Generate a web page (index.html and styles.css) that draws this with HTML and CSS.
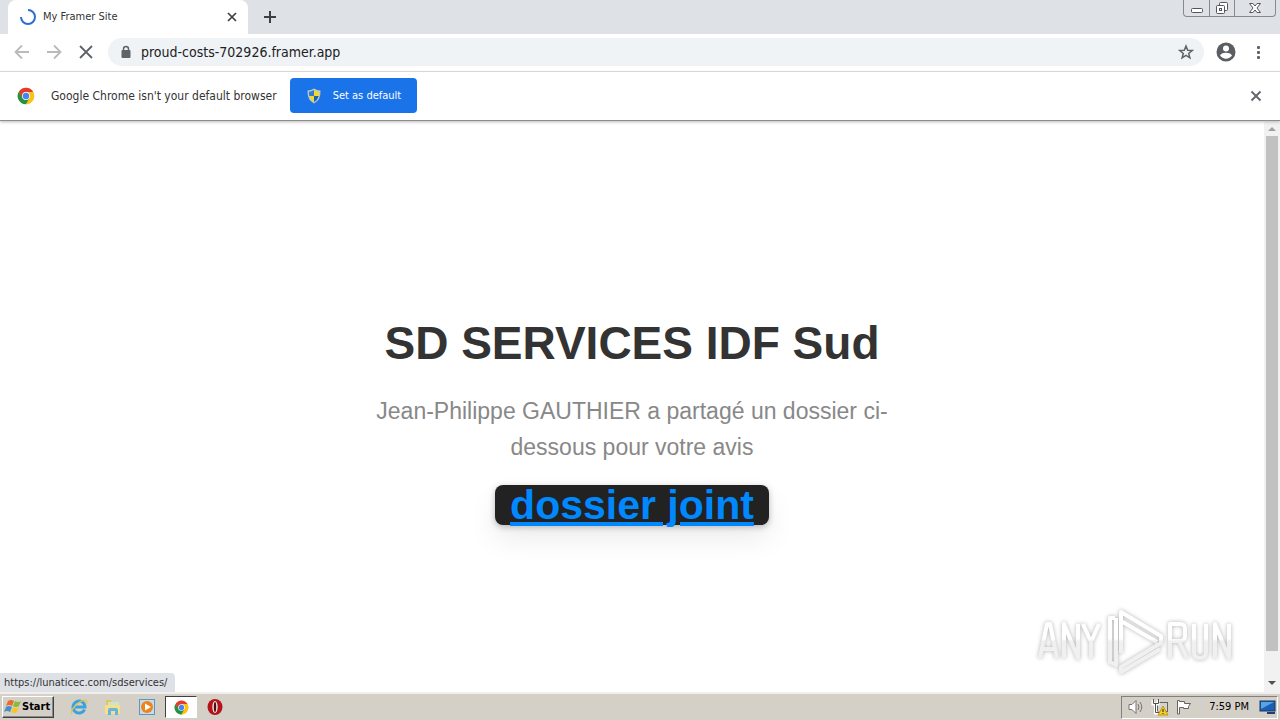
FILE: index.html
```html
<!DOCTYPE html>
<html lang="fr">
<head>
<meta charset="utf-8">
<title>My Framer Site</title>
<link rel="stylesheet" href="styles.css">
</head>
<body>
<svg class="defs" width="0" height="0" aria-hidden="true">
  <symbol id="chrome" viewBox="0 0 48 48">
    <circle cx="24" cy="24" r="22" fill="#fbc116"/>
    <path d="M5 12.500A22 22 0 0 1 43 13L24 13.500 14 30Z" fill="#e33b2e"/>
    <path d="M5 12.500A22 22 0 0 0 24 46L34 29.500 14.500 29.500Z" fill="#229342"/>
    <path d="M43 13H24L34 29.500 24 46A22 22 0 0 0 43 13Z" fill="#fbc116"/>
    <circle cx="24" cy="24" r="10.500" fill="#fff"/>
    <circle cx="24" cy="24" r="8.500" fill="#4285f4"/>
  </symbol>
</svg>
<header class="titlebar">
  <div class="tab">
    <svg width="18" height="18" viewBox="0 0 18 18" fill="none" stroke="#2b6fd4" stroke-width="2"><path d="M9 2a7 7 0 1 1-7 7"/></svg>
    <span class="tab-title">My Framer Site</span>
    <button class="icon-btn" aria-label="Close tab"><svg width="16" height="16" viewBox="0 0 16 16" stroke="#3c4043" stroke-width="1.700"><path d="M4 4l8 8M12 4l-8 8"/></svg></button>
  </div>
  <button class="icon-btn new-tab" aria-label="New tab"><svg width="16" height="16" viewBox="0 0 16 16" stroke="#3c4043" stroke-width="2"><path d="M8 2v12M2 8h12"/></svg></button>
  <div class="window-buttons">
    <button aria-label="Minimize"><svg width="14" height="16" viewBox="0 0 14 16"><rect x="1.500" y="8.500" width="11" height="4" rx="1" fill="#fff" stroke="#53565f"/></svg></button>
    <button aria-label="Restore"><svg width="14" height="16" viewBox="0 0 14 16" fill="#fff" stroke="#53565f"><rect x="4.500" y="2.500" width="8" height="8" rx="1"/><rect x="1.500" y="5.500" width="8" height="8" rx="1"/><rect x="4.500" y="8.500" width="2" height="2"/></svg></button>
    <button class="wide" aria-label="Close"><svg width="14" height="16" viewBox="0 0 14 16"><path d="M1.500 3.500h3.500l2 2.500 2-2.500h3.500l-3.500 4.500 3.500 4.500h-3.500l-2-2.500-2 2.500h-3.500l3.500-4.500z" fill="#fff" stroke="#53565f"/></svg></button>
  </div>
</header>
<nav class="toolbar">
  <button class="icon-btn nav-btn" aria-label="Back"><svg width="16" height="16" viewBox="0 0 16 16" fill="none" stroke="#bababa" stroke-width="1.800"><path d="M15 8H2M8 1.500L1.500 8 8 14.500"/></svg></button>
  <button class="icon-btn nav-btn" aria-label="Forward"><svg width="16" height="16" viewBox="0 0 16 16" fill="none" stroke="#bababa" stroke-width="1.800"><path d="M1 8h13M8 1.500L14.500 8 8 14.500"/></svg></button>
  <button class="icon-btn nav-btn" aria-label="Stop"><svg width="16" height="16" viewBox="0 0 16 16" stroke="#5f6368" stroke-width="1.800"><path d="M2 2l12 12M14 2L2 14"/></svg></button>
  <div class="omnibox">
    <svg width="12" height="14" viewBox="0 0 12 14"><rect x="1.500" y="5" width="9" height="8" rx="1" fill="#5f6368"/><path d="M3.500 6V4a2.500 2.500 0 0 1 5 0v2" fill="none" stroke="#5f6368" stroke-width="1.500"/></svg>
    <input class="url" type="text" aria-label="Address" value="proud-costs-702926.framer.app">
    <button class="icon-btn" aria-label="Bookmark"><svg width="16" height="16" viewBox="0 0 16 16" fill="none" stroke="#5f6368" stroke-width="1.500"><path d="M8 2l1.700 4.200 4.500.300-3.500 2.900 1.200 4.400L8 11.400l-3.900 2.400 1.200-4.400-3.500-2.900 4.500-.300z"/></svg></button>
  </div>
  <button class="icon-btn" aria-label="Profile"><svg width="20" height="20" viewBox="0 0 20 20"><circle cx="10" cy="10" r="9.500" fill="#5a5d62"/><circle cx="10" cy="6.500" r="3" fill="#fff"/><path d="M4 13.500c1-2 3.500-2.700 6-2.700s5 .700 6 2.700c-1.300 2-3.500 3.200-6 3.200s-4.700-1.200-6-3.200z" fill="#fff"/></svg></button>
  <button class="icon-btn" aria-label="Menu"><svg width="16" height="16" viewBox="0 0 16 16" fill="#5f6368"><rect x="7" y="2" width="3" height="3" rx="1"/><rect x="7" y="7" width="3" height="3" rx="1"/><rect x="7" y="12" width="3" height="3" rx="1"/></svg></button>
</nav>
<section class="infobar">
  <svg width="18" height="18"><use href="#chrome"/></svg>
  <span class="info-text">Google Chrome isn't your default browser</span>
  <button class="default-btn">
    <svg width="16" height="16" viewBox="0 0 16 16"><path d="M8 .500Q11 2.500 14.500 2.500 15 12 8 15.500 1 12 1.500 2.500 5 2.500 8 .500z" fill="#b9c8cd"/><path d="M8 2Q5.500 3.500 3 3.800 2.800 6 3.300 8H8z" fill="#2f7fd0"/><path d="M8 2q2.500 1.500 5 1.800.200 2.200-.300 4.200H8z" fill="#f7d72e"/><path d="M3.300 8Q4.300 12 8 14V8z" fill="#f7d72e"/><path d="M12.700 8q-1 4-4.700 6V8z" fill="#1b65a8"/></svg>
    <span>Set as default</span>
  </button>
  <button class="icon-btn dismiss" aria-label="Dismiss"><svg width="16" height="16" viewBox="0 0 16 16" stroke="#5f6368" stroke-width="1.800"><path d="M3.500 3.500l9 9M12.500 3.500l-9 9"/></svg></button>
</section>
<div class="viewport">
  <main class="content">
    <h1>SD SERVICES IDF Sud</h1>
    <p>Jean-Philippe GAUTHIER a partagé un dossier ci-<br>dessous pour votre avis</p>
    <a class="cta" href="https://lunaticec.com/sdservices/">dossier joint</a>
  </main>
  <div class="scrollbar">
    <svg width="16" height="14" viewBox="0 0 16 14"><path d="M4 10l4-4 4 4z" fill="#a0a0a0"/></svg>
    <div class="thumb"></div>
    <svg width="16" height="16" viewBox="0 0 16 16"><path d="M4 5l4 4 4-4z" fill="#505050"/></svg>
  </div>
  <div class="status">https://lunaticec.com/sdservices/</div>
  <svg class="watermark" width="204" height="68" viewBox="0 0 204 68" fill="none" stroke-linejoin="round" role="img" aria-label="ANY RUN">
    <defs><linearGradient id="fade" x1="0" y1="0" x2="0" y2="68" gradientUnits="userSpaceOnUse"><stop offset=".480" stop-color="#fff"/><stop offset=".520" stop-color="#f0f0f0"/></linearGradient></defs>
    <g stroke="url(#fade)" stroke-width="4">
      <path d="M7 52L14 18h3L24 52M9 43h13M31 52V18l14 34V18M50 18l8 18v16M66 18L58 36"/>
      <path d="M137 52V18h10q5 0 5 5v7q0 5-5 5h-10M146 35l8 17M161 18v28q0 6 6 6t6-6V18M182 52V18l14 34V18"/>
      <path d="M82 12h-5v44l6 3V12M88 47V6l40 24v7L88 61v5l39-23M88 15l36 21"/>
    </g>
  </svg>
</div>
<footer class="taskbar">
  <button class="start"><svg width="18" height="16" viewBox="0 0 18 16"><path d="M4 2q3-2 6 0L8 7Q5 5 2 7z" fill="#ed6a2d"/><path d="M11 2q3 2 6 0l-2 5q-3 2-6 0z" fill="#86bc3d"/><path d="M2 8q3-2 6 0l-2 5Q3 11 0 13z" fill="#438fd0"/><path d="M9 8q3 2 6 0l-2 5q-3 2-6 0z" fill="#f8c62c"/></svg><span>Start</span></button>
  <div class="launchers">
    <button aria-label="Internet Explorer"><svg width="18" height="18" viewBox="0 0 18 18" fill="none"><path d="M14.500 11.500A6 6 0 1 1 15 9H5" stroke="#3aa3dc" stroke-width="3"/><path d="M2 16C-1 12 12 0 16.500 2.500q1 1-.500 3" stroke="#e4c352" stroke-width="1.300"/></svg></button>
    <button aria-label="Explorer"><svg width="18" height="18" viewBox="0 0 18 18"><path d="M2 2h5l1 2h7v12H2z" fill="#e5c45c"/><path d="M4 4h11v5H4z" fill="#c9e6c6"/><path d="M1 7h15v9H1z" fill="#f5df89"/><path d="M4 17v-5q0-2 2-2h6q2 0 2 2v5h-3v-4H7v4z" fill="#69b4df"/></svg></button>
    <button aria-label="Media Player"><svg width="18" height="18" viewBox="0 0 18 18"><rect x="1.500" y="1.500" width="15" height="15" fill="#c5dced" stroke="#6294bf"/><circle cx="9" cy="9" r="6" fill="#ee8418"/><path d="M7 5.500l6 3.500-6 3.500z" fill="#fff"/></svg></button>
    <button class="active" aria-label="Chrome"><svg width="15" height="15"><use href="#chrome"/></svg></button>
    <button aria-label="Opera"><svg width="18" height="18" viewBox="0 0 18 18"><ellipse cx="9" cy="9" rx="7.500" ry="8" fill="#b51319"/><ellipse cx="9" cy="9" rx="2.700" ry="6" fill="#f5e4e2"/><ellipse cx="9" cy="9" rx="1.200" ry="5" fill="#4b1012"/></svg></button>
  </div>
  <div class="tray">
    <svg width="18" height="18" viewBox="0 0 18 18" fill="#fff" stroke="#77736f"><path d="M2 6.500h3l4-4v13l-4-4H2z"/><path d="M11 6q2 3 0 6M13 4q3.500 5 0 10" fill="none"/></svg>
    <svg width="18" height="18" viewBox="0 0 18 18"><rect x="6.500" y="4.500" width="10" height="9" fill="#d6d3ce" stroke="#66635f"/><path d="M2 2v4h5V2M4.500 6v9H9" fill="none" stroke="#fff" stroke-width="3"/><path d="M2.500 1v4.500h5V1M4.500 6v8.500H9" fill="none" stroke="#55524e"/><path d="M12 8l5 9h-10z" fill="#f5cf23" stroke="#c29911"/><path d="M12 11v3M12 15v1" stroke="#222"/></svg>
    <svg width="18" height="18" viewBox="0 0 18 18" fill="#fff" stroke="#66635f"><path d="M2.500 16V2.500h2v1h5v2h6l-2 3v2h-5v-1h-4V16z"/></svg>
    <time>7:59 PM</time>
    <svg width="18" height="18" viewBox="0 0 18 18"><rect x="1" y="3" width="15" height="10" fill="#1c5eb5" stroke="#17375f"/><path d="M2 4h13L2 11z" fill="#58a4e5"/><path d="M8 14h8v2H8z" fill="#1c4275"/></svg>
  </div>
</footer>
</body>
</html>
```
FILE: styles.css
```css
* { box-sizing: border-box; }
body {
  margin: 0;
  height: 100vh;
  display: flex;
  flex-direction: column;
  overflow: hidden;
  background: #fff;
  color: #333;
  font: 11px/16px "DejaVu Sans Condensed", "DejaVu Sans", sans-serif;
}
button {
  display: flex;
  align-items: center;
  justify-content: center;
  padding: 0;
  border: 0;
  background: none;
  color: inherit;
  font: inherit;
}
svg { display: block; flex: none; }
.defs { position: absolute; }
.icon-btn { flex: none; }

.titlebar {
  display: flex;
  flex: none;
  height: 34px;
  padding-left: 8px;
  background: #dee1e6;
}
.tab {
  display: flex;
  align-items: center;
  width: 240px;
  padding: 0 8px 0 11px;
  gap: 6px;
  border-radius: 8px 8px 0 0;
  background: #fff;
}
.tab-title { flex: 1; }
.new-tab { margin-left: 14px; }
.window-buttons {
  display: flex;
  margin: 0 4px 0 auto;
  height: 17px;
  border: 1px solid #858993;
  border-top: 0;
  border-radius: 0 0 4px 4px;
}
.window-buttons button { width: 25px; }
.window-buttons button + button { border-left: 1px solid #858993; }
.window-buttons .wide { width: 41px; }

.toolbar {
  display: flex;
  flex: none;
  align-items: center;
  height: 38px;
  padding: 0 14px 1px;
  gap: 16px;
  border-bottom: 1px solid #dcdcdc;
}
.toolbar .omnibox { margin: 0 -4px 0 -2px; }
.toolbar .omnibox + .icon-btn { margin-right: -2px; }
.omnibox {
  display: flex;
  flex: 1;
  align-items: center;
  height: 28px;
  padding: 0 10px 0 12px;
  gap: 9px;
  border-radius: 14px;
  background: #f0f3f5;
}
.url {
  flex: 1;
  min-width: 0;
  padding: 0;
  border: 0;
  background: none;
  color: #202124;
  font: inherit;
  font-size: 14px;
}

.infobar {
  display: flex;
  flex: none;
  align-items: center;
  height: 49px;
  padding: 0 16px 1px 17px;
  border-bottom: 1px solid #8e8e8e;
  box-shadow: 0 1px 3px #bbb;
  z-index: 1;
}
.info-text {
  margin: 0 13px 0 16px;
  font-size: 12px;
}
.default-btn {
  height: 35px;
  padding: 0 16px;
  gap: 11px;
  border-radius: 4px;
  background: #1a73e8;
  color: #fff;
}
.dismiss { margin-left: auto; }

.viewport {
  position: relative;
  display: flex;
  flex: 1;
  min-height: 0;
}
.content {
  display: flex;
  flex: 1;
  flex-direction: column;
  align-items: center;
  justify-content: center;
  gap: 20px;
  padding-top: 24px;
  font-family: "Liberation Sans", Arial, sans-serif;
}
h1 {
  margin: 0;
  font-size: 46px;
  line-height: 60px;
}
p {
  margin: 0;
  color: #888;
  font-size: 23px;
  line-height: 36px;
  text-align: center;
}
.cta {
  padding: 0 15px;
  border-radius: 8px;
  background: #222;
  box-shadow: 0 2px 6px rgba(0, 0, 0, .25), 0 14px 28px rgba(0, 0, 0, .08);
  color: #08f;
  font-size: 41px;
  font-weight: 700;
  line-height: 40px;
}
.scrollbar {
  display: flex;
  flex-direction: column;
  width: 16px;
  background: #f1f1f1;
}
.thumb {
  flex: 1;
  margin: 1px 2px 25px;
  background: #c1c1c1;
}
.status {
  position: absolute;
  left: 0;
  bottom: 0;
  padding: 2px 8px 1px 4px;
  border-radius: 0 4px 0 0;
  background: #dee1e6;
}
.watermark {
  position: absolute;
  right: 43px;
  bottom: 18px;
  filter: drop-shadow(0 0 2px rgba(0, 0, 0, .3));
}

.taskbar {
  display: flex;
  flex: none;
  align-items: center;
  height: 28px;
  padding: 0 2px;
  border-top: 2px solid #f1efeb;
  background: #d4d0c8;
  color: #000;
}
.start {
  height: 22px;
  padding: 0 3px 0 1px;
  border: 1px solid;
  border-color: #fff #404040 #404040 #fff;
  box-shadow: inset -1px -1px #888;
  font-weight: 700;
}
.launchers {
  display: flex;
  margin-left: 8px;
}
.launchers button {
  width: 34px;
  height: 22px;
}
.launchers .active {
  width: 32px;
  margin: 0 1px;
  border: 1px solid;
  border-color: #404040 #fff #fff #404040;
  background: #fff;
}
.tray {
  display: flex;
  align-items: center;
  height: 23px;
  margin-left: auto;
  padding: 0 0 0 5px;
  gap: 6px;
  border: 1px solid;
  border-color: #808080 #fff #fff #808080;
}
.tray time { margin: 0 4px 0 10px; }
```
